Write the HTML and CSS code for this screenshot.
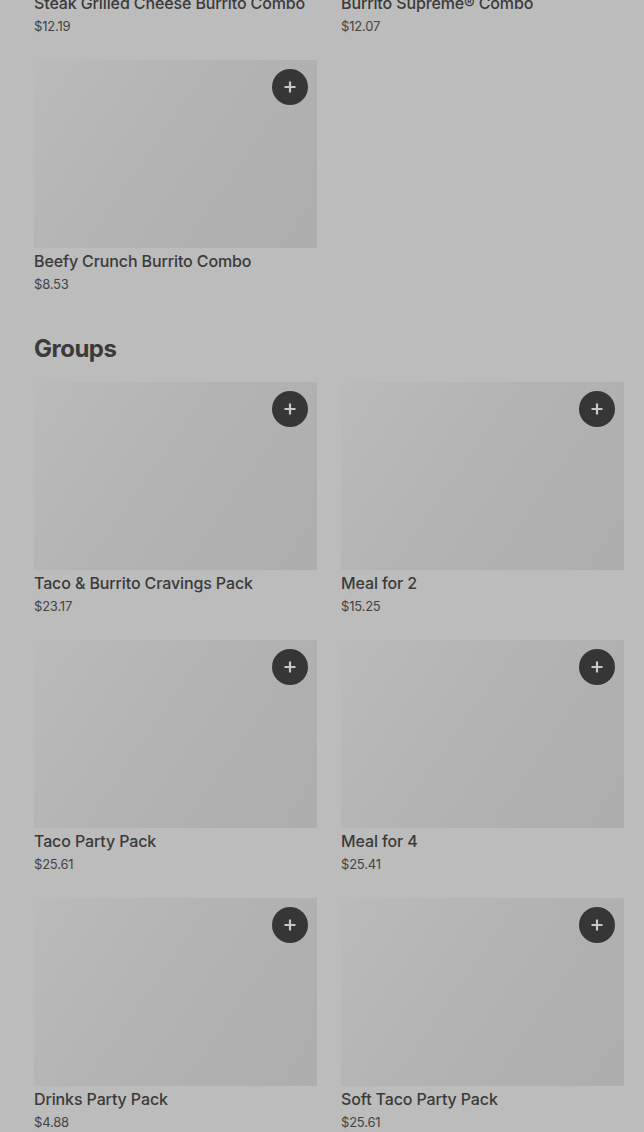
FILE: index.html
```html
<!DOCTYPE html>
<html>
<head>
<meta charset="utf-8">
<link rel="stylesheet" href="styles.css">
</head>
<body>
<main class="page">
  <section class="grid grid-first">
    <div class="card">
      <div class="thumb"><button class="add"><svg viewBox="0 0 14 14" width="14" height="14"><path d="M7 1.5v11M1.5 7h11" stroke="currentColor" stroke-width="2.2"/></svg></button></div>
      <div class="name">Steak Grilled Cheese Burrito Combo</div>
      <div class="price">$12.19</div>
    </div>
    <div class="card">
      <div class="thumb"><button class="add"><svg viewBox="0 0 14 14" width="14" height="14"><path d="M7 1.5v11M1.5 7h11" stroke="currentColor" stroke-width="2.2"/></svg></button></div>
      <div class="name">Burrito Supreme® Combo</div>
      <div class="price">$12.07</div>
    </div>
    <div class="card">
      <div class="thumb"><button class="add"><svg viewBox="0 0 14 14" width="14" height="14"><path d="M7 1.5v11M1.5 7h11" stroke="currentColor" stroke-width="2.2"/></svg></button></div>
      <div class="name">Beefy Crunch Burrito Combo</div>
      <div class="price">$8.53</div>
    </div>
  </section>

  <h2 class="section-title">Groups</h2>

  <section class="grid">
    <div class="card">
      <div class="thumb"><button class="add"><svg viewBox="0 0 14 14" width="14" height="14"><path d="M7 1.5v11M1.5 7h11" stroke="currentColor" stroke-width="2.2"/></svg></button></div>
      <div class="name">Taco &amp; Burrito Cravings Pack</div>
      <div class="price">$23.17</div>
    </div>
    <div class="card">
      <div class="thumb"><button class="add"><svg viewBox="0 0 14 14" width="14" height="14"><path d="M7 1.5v11M1.5 7h11" stroke="currentColor" stroke-width="2.2"/></svg></button></div>
      <div class="name">Meal for 2</div>
      <div class="price">$15.25</div>
    </div>
    <div class="card">
      <div class="thumb"><button class="add"><svg viewBox="0 0 14 14" width="14" height="14"><path d="M7 1.5v11M1.5 7h11" stroke="currentColor" stroke-width="2.2"/></svg></button></div>
      <div class="name">Taco Party Pack</div>
      <div class="price">$25.61</div>
    </div>
    <div class="card">
      <div class="thumb"><button class="add"><svg viewBox="0 0 14 14" width="14" height="14"><path d="M7 1.5v11M1.5 7h11" stroke="currentColor" stroke-width="2.2"/></svg></button></div>
      <div class="name">Meal for 4</div>
      <div class="price">$25.41</div>
    </div>
    <div class="card">
      <div class="thumb"><button class="add"><svg viewBox="0 0 14 14" width="14" height="14"><path d="M7 1.5v11M1.5 7h11" stroke="currentColor" stroke-width="2.2"/></svg></button></div>
      <div class="name">Drinks Party Pack</div>
      <div class="price">$4.88</div>
    </div>
    <div class="card">
      <div class="thumb"><button class="add"><svg viewBox="0 0 14 14" width="14" height="14"><path d="M7 1.5v11M1.5 7h11" stroke="currentColor" stroke-width="2.2"/></svg></button></div>
      <div class="name">Soft Taco Party Pack</div>
      <div class="price">$25.61</div>
    </div>
  </section>
</main>
</body>
</html>
```
FILE: styles.css
```css
html, body {
  margin: 0;
  padding: 0;
  background: #bcbcbc;
  overflow: hidden;
}
body {
  font-family: Inter, "Noto Sans", "Liberation Sans", sans-serif;
  color: #3b3b3b;
}
.page {
  padding: 0 20px 0 34px;
}
.grid {
  display: grid;
  grid-template-columns: 283px 283px;
  column-gap: 24px;
  row-gap: 25px;
}
.grid-first {
  margin-top: -198px;
}
.card {
  display: flex;
  flex-direction: column;
}
.thumb {
  position: relative;
  height: 188px;
  background: linear-gradient(125deg, #bbbbbb 0%, #b4b4b4 40%, #adadad 100%);
}
.add {
  position: absolute;
  top: 9px;
  right: 9px;
  width: 36px;
  height: 36px;
  border: 0;
  border-radius: 50%;
  background: #363636;
  color: #c8c8c8;
  display: flex;
  align-items: center;
  justify-content: center;
  padding: 0;
}
.name {
  margin-top: 3px;
  font-size: 16px;
  line-height: 20px;
  font-weight: 500;
  letter-spacing: -0.12px;
  color: #3a3a3a;
  white-space: nowrap;
}
.price {
  margin-top: 4px;
  font-size: 13px;
  line-height: 18px;
  letter-spacing: -0.2px;
  color: #444444;
}
.section-title {
  margin: 40px 0 17px;
  font-size: 24px;
  line-height: 32px;
  font-weight: 700;
  letter-spacing: -0.5px;
  color: #3a3a3a;
}
```
